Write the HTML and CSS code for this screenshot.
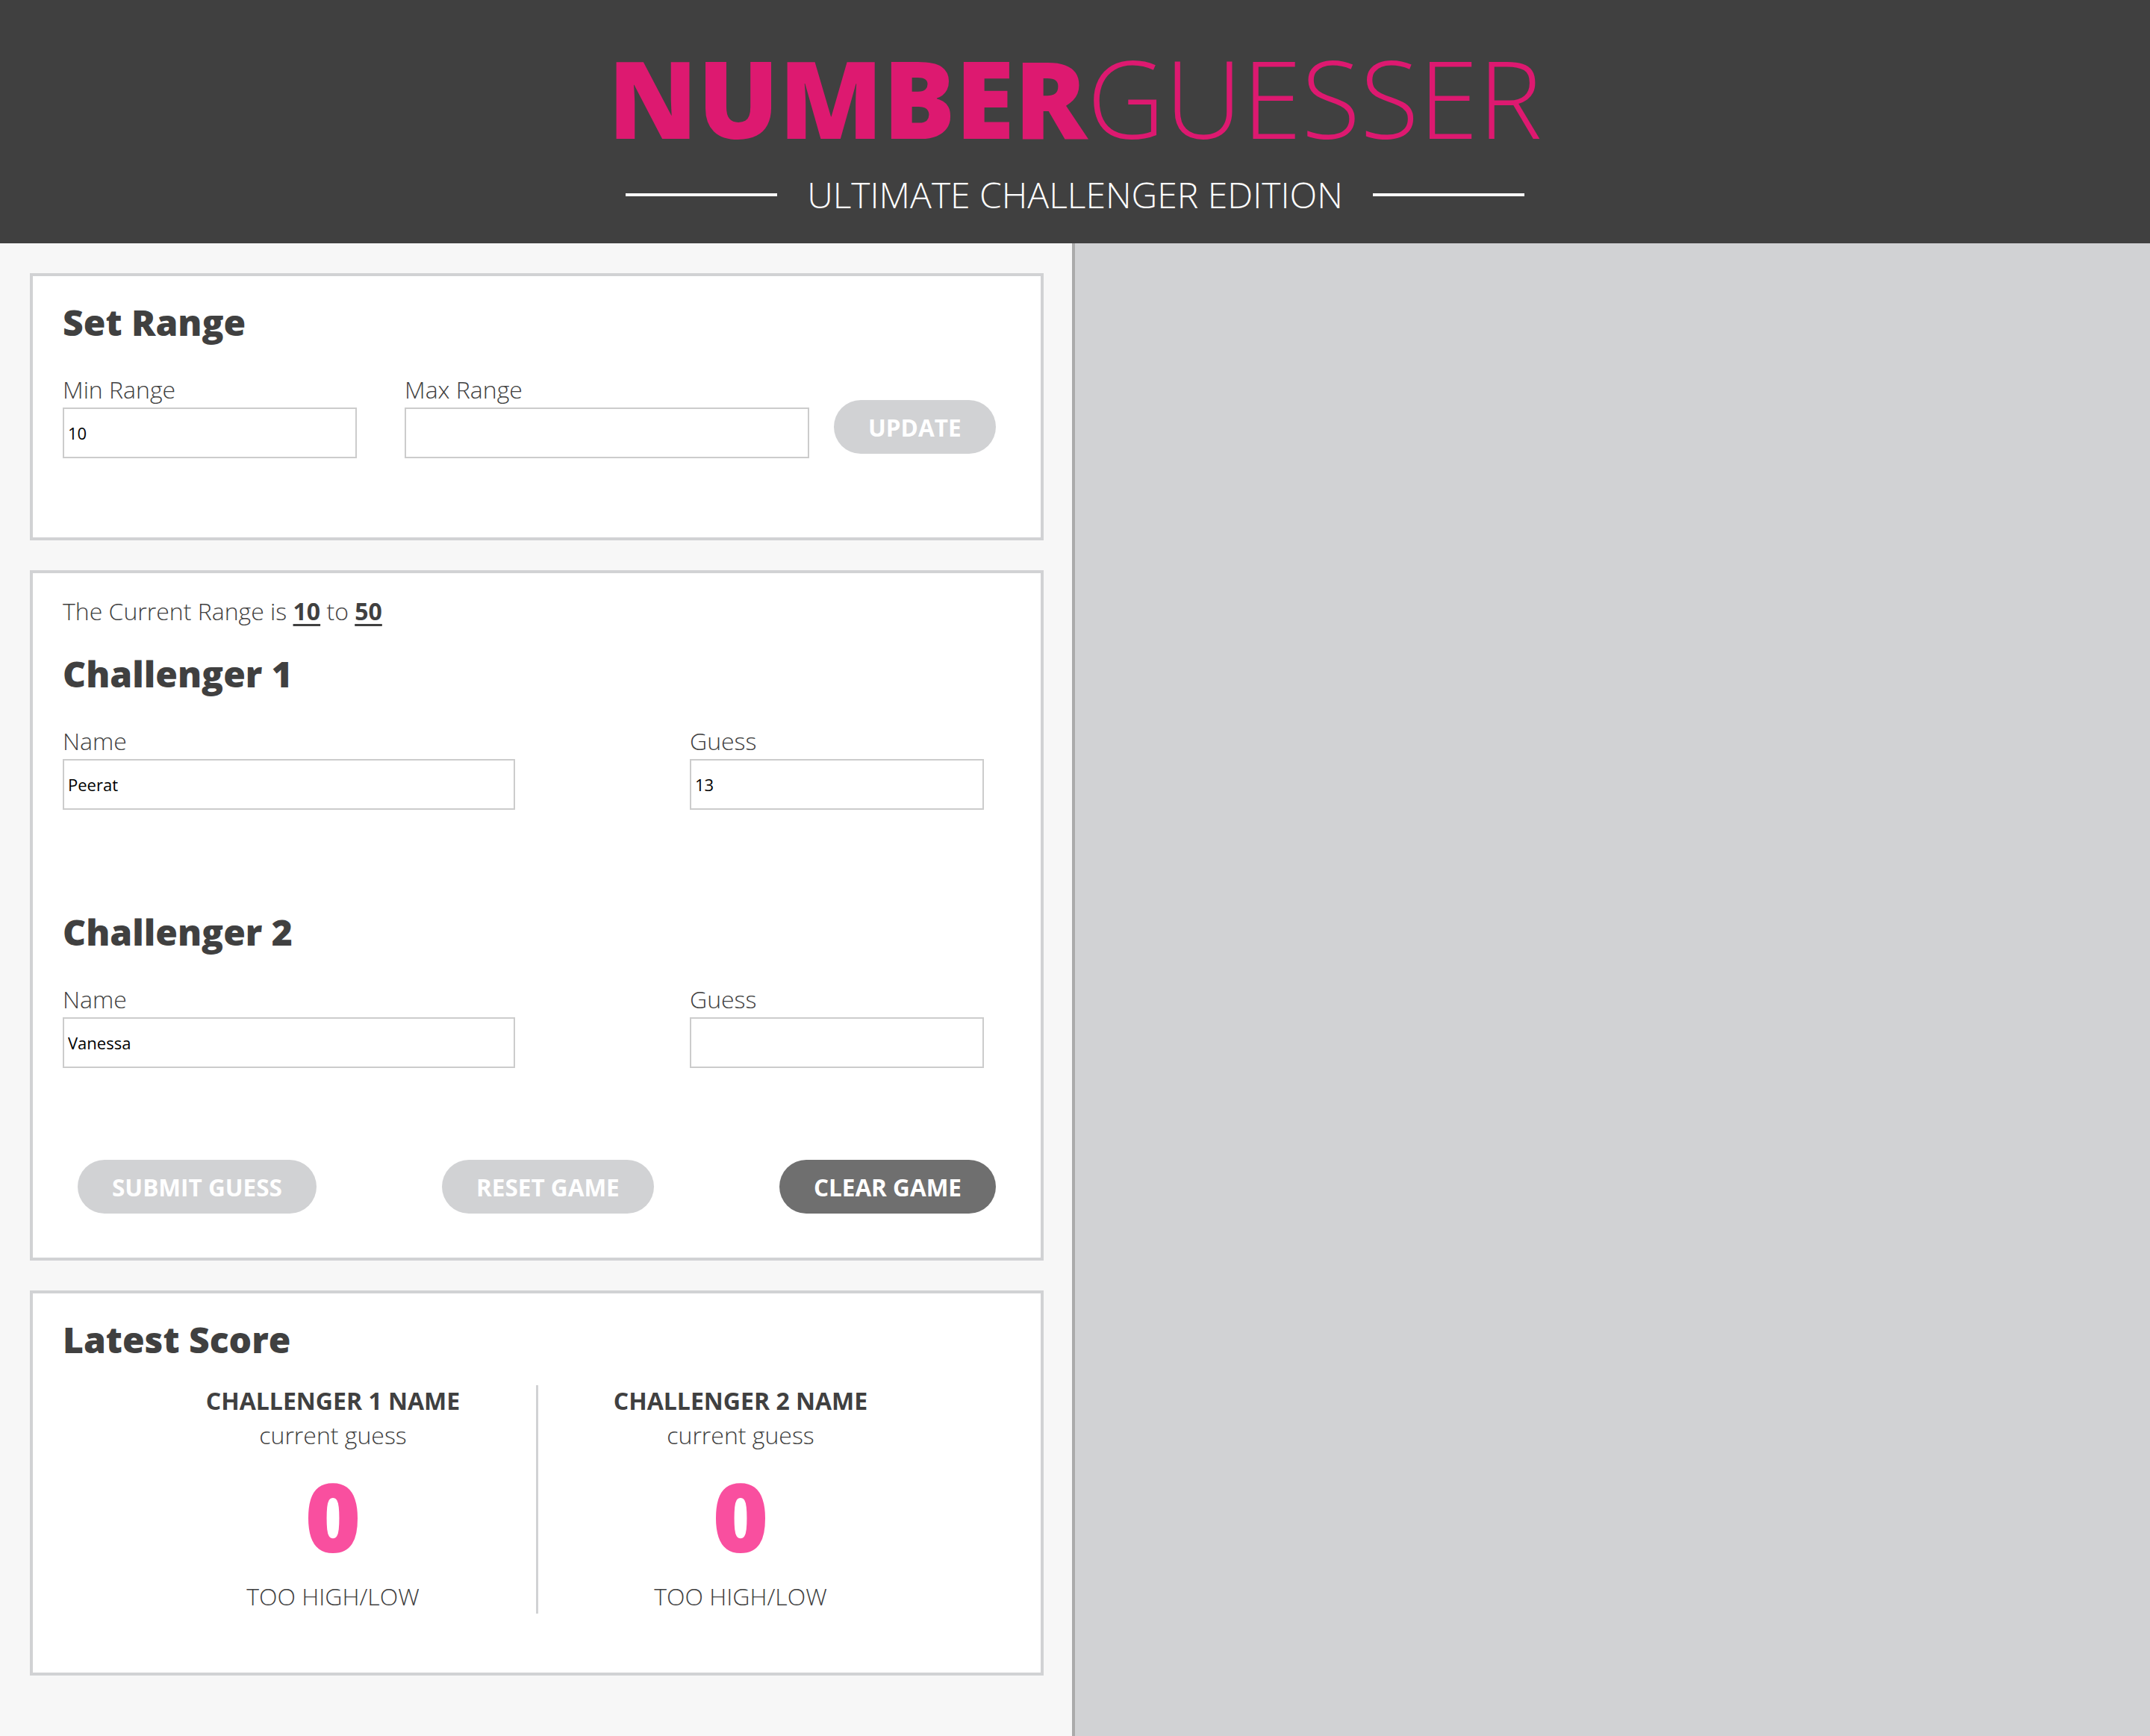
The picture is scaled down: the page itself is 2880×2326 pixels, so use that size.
FILE: index.html
```html
<!DOCTYPE html>
<html lang="en">
<head>
<meta charset="utf-8">
<title>Number Guesser</title>
<link rel="stylesheet" href="styles.css">
</head>
<body>
<header class="site-header">
  <h1 class="logo"><span class="logo-bold">NUMBER</span><span class="logo-light">GUESSER</span></h1>
  <div class="tagline">
    <span class="rule"></span>
    <span class="tagline-text">ULTIMATE CHALLENGER EDITION</span>
    <span class="rule"></span>
  </div>
</header>
<main class="layout">
  <section class="left-col">
    <div class="card range-card">
      <h2 class="card-title">Set Range</h2>
      <div class="range-row">
        <div class="field field-min">
          <label class="field-label">Min Range</label>
          <input class="text-input" type="text" value="10">
        </div>
        <div class="field field-max">
          <label class="field-label">Max Range</label>
          <input class="text-input" type="text" value="">
        </div>
        <button class="pill pill-light update-btn" type="button">UPDATE</button>
      </div>
    </div>

    <div class="card game-card">
      <p class="current-range">The Current Range is <strong>10</strong> to <strong>50</strong></p>
      <h2 class="card-title challenger-title">Challenger 1</h2>
      <div class="player-row">
        <div class="field field-name">
          <label class="field-label">Name</label>
          <input class="text-input" type="text" value="Peerat">
        </div>
        <div class="field field-guess">
          <label class="field-label">Guess</label>
          <input class="text-input" type="text" value="13">
        </div>
      </div>
      <h2 class="card-title challenger-title second">Challenger 2</h2>
      <div class="player-row">
        <div class="field field-name">
          <label class="field-label">Name</label>
          <input class="text-input" type="text" value="Vanessa">
        </div>
        <div class="field field-guess">
          <label class="field-label">Guess</label>
          <input class="text-input" type="text" value="">
        </div>
      </div>
      <div class="button-row">
        <button class="pill pill-light" type="button">SUBMIT GUESS</button>
        <button class="pill pill-light" type="button">RESET GAME</button>
        <button class="pill pill-dark" type="button">CLEAR GAME</button>
      </div>
    </div>

    <div class="card score-card">
      <h2 class="card-title">Latest Score</h2>
      <div class="score-row">
        <div class="score-col">
          <div class="score-name">CHALLENGER 1 NAME</div>
          <div class="score-sub">current guess</div>
          <div class="score-num">0</div>
          <div class="score-result">TOO HIGH/LOW</div>
        </div>
        <div class="score-divider"></div>
        <div class="score-col">
          <div class="score-name">CHALLENGER 2 NAME</div>
          <div class="score-sub">current guess</div>
          <div class="score-num">0</div>
          <div class="score-result">TOO HIGH/LOW</div>
        </div>
      </div>
    </div>
  </section>
  <section class="right-col"></section>
</main>
</body>
</html>
```

FILE: styles.css
```css
* {
  box-sizing: border-box;
}

html,
body {
  margin: 0;
  padding: 0;
}

body {
  font-family: "Open Sans", "Liberation Sans", sans-serif;
  color: #404040;
  background: #f7f7f7;
}

/* Header */
.site-header {
  background: #404040;
  height: 326px;
  padding-top: 32px;
  text-align: center;
}

.logo {
  margin: 0;
  font-size: 144px;
  line-height: 196px;
  font-weight: 300;
  color: #dd1970;
  letter-spacing: 0;
}

.logo-bold {
  font-weight: 800;
}

.logo-light {
  font-weight: 300;
}

.tagline {
  display: flex;
  justify-content: center;
  align-items: center;
  gap: 40px;
  color: #ffffff;
  font-size: 48px;
  font-weight: 300;
  line-height: 65px;
}

.rule {
  display: block;
  width: 203px;
  height: 4px;
  background: #ffffff;
}

/* Layout */
.layout {
  display: flex;
  min-height: calc(100vh - 326px);
}

.left-col {
  width: 50%;
  background: #f7f7f7;
  border-right: 4px solid #ababab;
  padding: 40px 38px 40px 40px;
  display: flex;
  flex-direction: column;
  gap: 40px;
}

.right-col {
  flex: 1;
  background: #d1d2d4;
}

/* Cards */
.card {
  background: #ffffff;
  border: 4px solid #d1d2d4;
  padding: 28px 60px 0 40px;
}

.card-title {
  margin: 0;
  font-size: 48px;
  line-height: 68px;
  font-weight: 800;
  color: #404040;
}

.field {
  display: flex;
  flex-direction: column;
}

.field-label {
  font-size: 32px;
  line-height: 45px;
  font-weight: 300;
  color: #404040;
  margin-bottom: 2px;
}

.text-input {
  height: 68px;
  border: 2px solid #cccccc;
  background: #ffffff;
  padding: 0 5px;
  font-family: "Open Sans", "Liberation Sans", sans-serif;
  font-size: 22px;
  color: #000000;
  outline: none;
  border-radius: 0;
}

/* Range card */
.range-card {
  padding-bottom: 106px;
}

.range-row {
  display: flex;
  align-items: flex-end;
  margin-top: 33px;
}

.field-min {
  width: 394px;
}

.field-max {
  width: 542px;
  margin-left: 64px;
}

.update-btn {
  margin-left: 33px;
  margin-bottom: 6px;
}

/* Pills */
.pill {
  height: 72px;
  padding: 0 46px;
  border: none;
  border-radius: 36px;
  font-family: "Open Sans", "Liberation Sans", sans-serif;
  font-size: 31.5px;
  font-weight: 700;
  color: #ffffff;
  cursor: pointer;
}

.pill-light {
  background: #d1d2d4;
}

.pill-dark {
  background: #6f6f6f;
}

/* Game card */
.game-card {
  padding-bottom: 59px;
}

.current-range {
  margin: 0;
  font-size: 32px;
  line-height: 46px;
  font-weight: 300;
}

.current-range strong {
  font-weight: 700;
  text-decoration: underline;
  text-decoration-thickness: 3px;
  text-underline-offset: 5px;
}

.challenger-title {
  margin-top: 27px;
}

.challenger-title.second {
  margin-top: 130px;
}

.player-row {
  display: flex;
  margin-top: 33px;
}

.field-name {
  width: 606px;
}

.field-guess {
  width: 394px;
  margin-left: 234px;
}

.button-row {
  display: flex;
  justify-content: space-between;
  margin-top: 123px;
  padding-left: 20px;
}

/* Score card */
.score-card {
  padding-right: 40px;
  padding-bottom: 79px;
}

.score-row {
  display: flex;
  justify-content: center;
  margin-top: 25px;
}

.score-col {
  width: 543px;
  text-align: center;
}

.score-divider {
  width: 3px;
  background: #d1d2d4;
  margin-top: 2px;
}

.score-name {
  font-size: 32px;
  line-height: 46px;
  font-weight: 700;
}

.score-sub {
  font-size: 32px;
  line-height: 46px;
  font-weight: 300;
}

.score-num {
  font-size: 128px;
  line-height: 170px;
  font-weight: 800;
  color: #f94f9f;
}

.score-result {
  font-size: 32px;
  line-height: 46px;
  font-weight: 300;
}
```
